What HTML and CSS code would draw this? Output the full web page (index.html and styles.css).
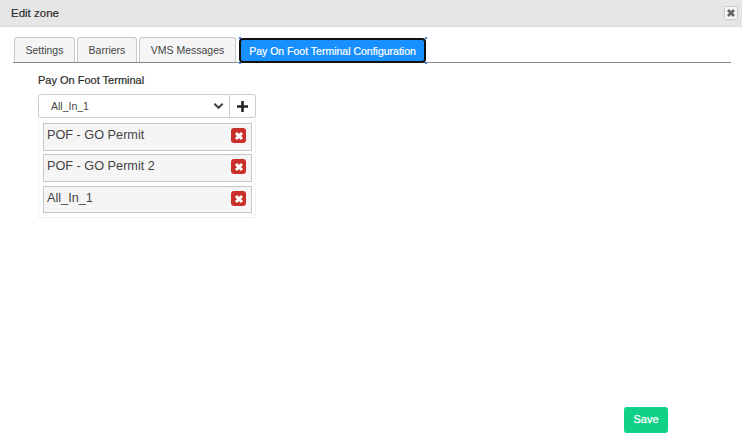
FILE: index.html
```html
<!DOCTYPE html>
<html lang="en">
<head>
<meta charset="utf-8">
<title>Edit zone</title>
<link rel="stylesheet" href="styles.css">
</head>
<body>
<div class="dialog">
  <header class="titlebar">
    <span class="title">Edit zone</span>
    <button class="close" aria-label="Close">
      <svg viewBox="0 0 10 10" width="10" height="10"><path d="M2 2 8 8M8 2 2 8" stroke="#666" stroke-width="2.8" fill="none"/></svg>
    </button>
  </header>
  <div class="content">
    <nav class="tabs">
      <a class="tab tab-settings">Settings</a>
      <a class="tab tab-barriers">Barriers</a>
      <a class="tab tab-vms">VMS Messages</a>
      <a class="tab-active"><span class="tab-active-inner">Pay On Foot Terminal Configuration</span></a>
    </nav>
    <section class="panel">
      <div class="label">Pay On Foot Terminal</div>
      <div class="picker">
        <div class="select">
          <span>All_In_1</span>
          <svg class="chev" viewBox="0 0 12 8" width="11" height="8"><path d="M1.5 1.5 6 6l4.5-4.5" stroke="#444" stroke-width="2.2" fill="none"/></svg>
        </div>
        <button class="add" aria-label="Add"><svg viewBox="0 0 12 12" width="11" height="11"><path d="M6 0v12M0 6h12" stroke="#222" stroke-width="2.8" fill="none"/></svg></button>
      </div>
      <div class="list">
        <div class="item item-a"><span>POF - GO Permit</span><button class="del" aria-label="Remove"><svg viewBox="0 0 10 10" width="10" height="10"><path d="M2 2 8 8M8 2 2 8" stroke="#fff" stroke-width="3" fill="none"/></svg></button></div>
        <div class="item item-b"><span>POF - GO Permit 2</span><button class="del" aria-label="Remove"><svg viewBox="0 0 10 10" width="10" height="10"><path d="M2 2 8 8M8 2 2 8" stroke="#fff" stroke-width="3" fill="none"/></svg></button></div>
        <div class="item item-c"><span>All_In_1</span><button class="del" aria-label="Remove"><svg viewBox="0 0 10 10" width="10" height="10"><path d="M2 2 8 8M8 2 2 8" stroke="#fff" stroke-width="3" fill="none"/></svg></button></div>
      </div>
    </section>
  </div>
  <footer class="footer"><button class="save">Save</button></footer>
</div>
</body>
</html>
```
FILE: styles.css
```css
* { box-sizing: border-box; }
html, body { margin: 0; height: 100%; background: #fff; }
body { font-family: "Liberation Sans", Arial, sans-serif; color: #333; overflow: hidden; }
button { font-family: inherit; padding: 0; cursor: pointer; }

.dialog { display: flex; flex-direction: column; height: 437px; }

.titlebar {
  height: 27px; flex: none;
  display: flex; align-items: center; justify-content: space-between;
  padding: 0 4px 1px 11px;
  background: #e6e6e6; border-bottom: 1px solid #dcdcdc;
}
.title { font-size: 11.5px; color: #2b2b2b; -webkit-text-stroke: 0.2px #2b2b2b; }
.close {
  width: 14px; height: 14px; margin-top: 1px;
  display: flex; align-items: center; justify-content: center;
  background: #f6f6f6; border: 1px solid #ccc; border-radius: 2px;
}

.content { padding: 10px 11px 0 13px; }

.tabs { display: flex; height: 26px; border-bottom: 1px solid #888; padding-left: 1px; }
.tab {
  display: flex; align-items: center; justify-content: center;
  height: 25px; font-size: 10.5px; color: #444;
  background: #f5f5f5; border: 1px solid #c9c9c9; border-bottom: 0;
  border-radius: 3px 3px 0 0;
}
.tab-settings { width: 61px; margin-right: 2px; }
.tab-barriers { width: 60px; margin-right: 2px; }
.tab-vms { width: 97px; margin-right: 3px; }
.tab-active {
  display: block; width: 188px; height: 27px; margin-top: 0;
  padding: 1px 1px 1px 0;
  background:
    linear-gradient(#3f7fe6, #3f7fe6) left top / 2px 2px no-repeat,
    linear-gradient(#3f7fe6, #3f7fe6) right top / 2px 2px no-repeat,
    linear-gradient(#3f7fe6, #3f7fe6) left bottom / 2px 2px no-repeat,
    linear-gradient(#3f7fe6, #3f7fe6) right bottom / 2px 2px no-repeat;
}
.tab-active-inner {
  display: flex; align-items: center; justify-content: center;
  height: 100%;
  font-size: 10.5px;
  background: #1890ff; color: #fff; -webkit-text-stroke: 0.2px #fff;
  border: 2px solid #111; border-radius: 4px;
}

.panel { width: 218px; margin-left: 25px; }
.label { margin-top: 10px; height: 14px; line-height: 14px; font-size: 11px; color: #2b2b2b; -webkit-text-stroke: 0.2px #2b2b2b; }
.picker { display: flex; margin-top: 7px; height: 24px; }
.select {
  width: 192px; display: flex; align-items: center; justify-content: space-between;
  padding: 0 5px 0 12px;
  font-size: 10.5px; color: #444;
  background: #fff; border: 1px solid #ccc; border-radius: 3px 0 0 3px;
}
.add {
  width: 26px; display: flex; align-items: center; justify-content: center;
  background: #fff; border: 1px solid #ccc; border-left: 0; border-radius: 0 3px 3px 0;
}

.list {
  height: 100px; padding: 5px 3px 0 4px;
  border: 1px solid #f2f2f2; border-top: 0;
}
.item {
  display: flex; justify-content: space-between; align-items: flex-start;
  padding: 4px 5px 0 3px;
  font-size: 12.7px; line-height: 14px; color: #444;
  background: #f5f5f5; border: 1px solid #c8c8c8;
}
.item-a { height: 28px; margin-bottom: 3px; }
.item-b { height: 28px; margin-bottom: 4px; }
.item-c { height: 27px; }
.del {
  width: 15px; height: 15px; flex: none;
  display: flex; align-items: center; justify-content: center;
  background: #c9302c; border: 0; border-radius: 3px;
}

.footer { margin-top: auto; display: flex; justify-content: flex-end; padding: 0 74px 4px 0; }
.save {
  width: 44px; height: 26px; padding-bottom: 2px;
  background: #10d187; color: #fff; font-size: 11px; -webkit-text-stroke: 0.25px #fff;
  border: 0; border-radius: 3px;
}
```
